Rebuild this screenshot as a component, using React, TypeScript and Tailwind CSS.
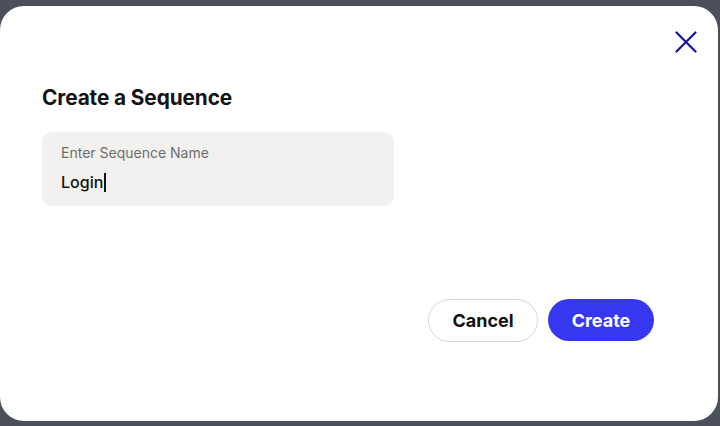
import React from 'react';

export default function App() {
  return (
    <div className="w-[720px] h-[426px] bg-[#4b4f5a] pt-[6px] overflow-hidden" style={{ fontFamily: 'Inter, "Liberation Sans", sans-serif' }}>
      <div className="w-[718px] h-[415px] bg-white rounded-[24px] flex flex-col pl-[42px] pr-[64px]">
        <div className="flex justify-end pt-[20px] -mr-[48px] h-[58px]">
          <button type="button" className="w-[32px] h-[32px] flex items-center justify-center text-[#12129e]">
            <svg width="22" height="22" viewBox="0 0 22 22" fill="none" stroke="currentColor" strokeWidth="2.2" strokeLinecap="round">
              <path d="M1.5 1.5 L20.5 20.5 M20.5 1.5 L1.5 20.5" />
            </svg>
          </button>
        </div>

        <h1 className="text-[20.8px] leading-[28px] font-bold text-[#141414] mt-[20px] tracking-[-0.1px]">Create a Sequence</h1>

        <div className="mt-[20px] w-[352px] h-[74px] bg-[#f2f1ef] rounded-[10px] pl-[19px] pt-[12px]">
          <div className="text-[14px] leading-[18px] text-[#6e6e6e]">Enter Sequence Name</div>
          <div className="mt-[9px] flex items-center h-[22px]">
            <span className="text-[16px] leading-[22px] font-medium text-[#141414]">Login</span>
            <span className="w-[1.5px] h-[19px] bg-[#141414] ml-[1px]" />
          </div>
        </div>

        <div className="flex justify-end gap-[10px] mt-[93px]">
          <button type="button" className="w-[110px] h-[43px] rounded-full border border-[#d3d6dc] bg-white text-[18px] font-bold text-[#111]">
            Cancel
          </button>
          <button type="button" className="w-[106px] h-[42px] rounded-full bg-[#3737f2] text-[18px] font-bold text-white">
            Create
          </button>
        </div>
      </div>
    </div>
  );
}
